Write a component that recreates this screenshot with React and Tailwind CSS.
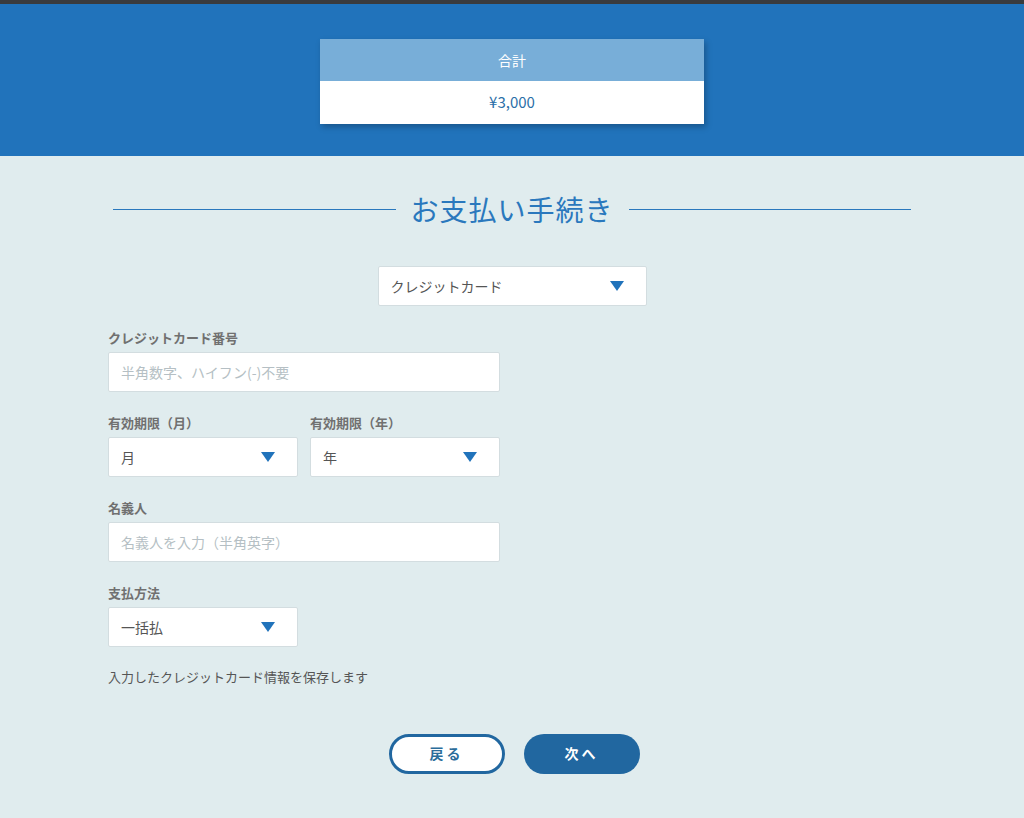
const F = { fontFamily: '"Noto Sans CJK JP", "Noto Sans", sans-serif' };

function Arrow() {
  return (
    <svg width="14" height="10" viewBox="0 0 14 10"><path d="M0 0H14L7 10Z" fill="#2173bb" /></svg>
  );
}

function Select({ label, w, cls = "" }) {
  return (
    <div className={`h-[40px] ${w} bg-white border border-[#d3dde0] rounded-[2px] flex items-center justify-between pl-[12px] pr-[22px] ${cls}`}>
      <span className="text-[14px] text-[#555]">{label}</span>
      <Arrow />
    </div>
  );
}

function Label({ children }) {
  return <div className="text-[13px] font-bold text-[#707070] h-[20px] leading-[20px] mb-[4px]">{children}</div>;
}

function Input({ ph }) {
  return (
    <div className="h-[40px] w-[392px] bg-white border border-[#d3dde0] rounded-[2px] flex items-center px-[12px]">
      <span className="text-[14px] text-[#b5bfc4]">{ph}</span>
    </div>
  );
}

export default function App() {
  return (
    <div style={F} className="w-[1024px] h-[818px] bg-[#e0ecee] flex flex-col overflow-hidden">
      <div className="h-[4px] bg-[#3a3b3d]" />
      <div className="h-[152px] bg-[#2173bb] flex justify-center pt-[35px]">
        <div className="w-[384px] h-[85px] shadow-[2px_3px_6px_rgba(0,0,0,0.25)]">
          <div className="h-[42px] bg-[#78aed8] flex items-center justify-center text-white text-[14px]">合計</div>
          <div className="h-[43px] bg-white flex items-center justify-center text-[#2b6fa8] text-[15px]">¥3,000</div>
        </div>
      </div>
      <div className="flex items-center mt-[33px] px-[113px] h-[40px]">
        <div className="flex-1 h-px bg-[#2a78bd]" />
        <div className="px-[15px] text-[28px] text-[#2a78bd] tracking-[1px]">お支払い手続き</div>
        <div className="flex-1 h-px bg-[#2a78bd]" />
      </div>
      <div className="flex justify-center mt-[37px]">
        <Select label="クレジットカード" w="w-[269px]" />
      </div>
      <div className="pl-[108px] mt-[22px] flex flex-col">
        <Label>クレジットカード番号</Label>
        <Input ph="半角数字、ハイフン(-)不要" />
        <div className="flex gap-[12px] mt-[21px]">
          <div><Label>有効期限（月）</Label><Select label="月" w="w-[190px]" /></div>
          <div><Label>有効期限（年）</Label><Select label="年" w="w-[190px]" /></div>
        </div>
        <div className="mt-[21px]"><Label>名義人</Label><Input ph="名義人を入力（半角英字）" /></div>
        <div className="mt-[21px]"><Label>支払方法</Label><Select label="一括払" w="w-[190px]" /></div>
        <div className="mt-[20px] text-[13px] text-[#555]">入力したクレジットカード情報を保存します</div>
      </div>
      <div className="flex justify-center gap-[19px] mt-[47px] pl-[4px]">
        <div className="w-[116px] h-[40px] rounded-full border-[3px] border-[#2167a0] bg-white flex items-center justify-center text-[#2b6c9a] font-bold text-[14px] tracking-[3px]">戻る</div>
        <div className="w-[116px] h-[40px] rounded-full bg-[#2167a0] flex items-center justify-center text-white font-bold text-[14px] tracking-[3px]">次へ</div>
      </div>
    </div>
  );
}
